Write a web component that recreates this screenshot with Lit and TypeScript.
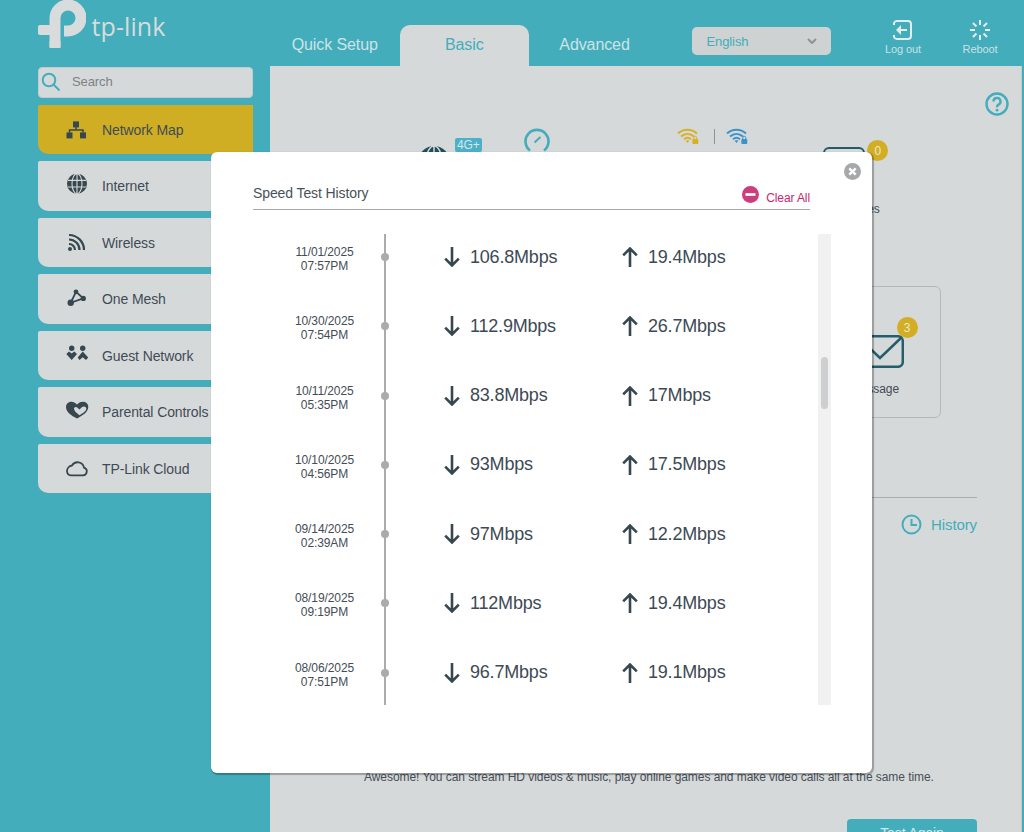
import { LitElement, html, svg, css } from 'lit';
import { customElement } from 'lit/decorators.js';

const menu = [
  { label: 'Network Map', icon: 'map', active: true },
  { label: 'Internet', icon: 'globe' },
  { label: 'Wireless', icon: 'wifi' },
  { label: 'One Mesh', icon: 'mesh' },
  { label: 'Guest Network', icon: 'guest' },
  { label: 'Parental Controls', icon: 'heart' },
  { label: 'TP-Link Cloud', icon: 'cloud' },
];

const history = [
  ['11/01/2025', '07:57PM', '106.8Mbps', '19.4Mbps'],
  ['10/30/2025', '07:54PM', '112.9Mbps', '26.7Mbps'],
  ['10/11/2025', '05:35PM', '83.8Mbps', '17Mbps'],
  ['10/10/2025', '04:56PM', '93Mbps', '17.5Mbps'],
  ['09/14/2025', '02:39AM', '97Mbps', '12.2Mbps'],
  ['08/19/2025', '09:19PM', '112Mbps', '19.4Mbps'],
  ['08/06/2025', '07:51PM', '96.7Mbps', '19.1Mbps'],
];

const menuIcon = (name: string) => {
  switch (name) {
    case 'map':
      return html`<svg viewBox="0 0 24 24" fill="#37474f" stroke="none">
        <rect x="9" y="3.4" width="6" height="6" />
        <rect x="2.5" y="14.4" width="6" height="6" />
        <rect x="16" y="14.4" width="6" height="6" />
        <path d="M5.5 14.5V12H19V14.5M12 9V12" fill="none" stroke="#37474f" stroke-width="1.5" />
      </svg>`;
    case 'globe':
      return html`<svg viewBox="0 0 24 24">
        <circle cx="13" cy="9.7" r="10" fill="#37474f" />
        <g fill="none" stroke="#d6d9da" stroke-width="1.1">
          <path d="M4 6.4H22M4 13H22M13 0V20" />
          <ellipse cx="13" cy="9.7" rx="5" ry="10" />
        </g>
      </svg>`;
    case 'wifi':
      return html`<svg viewBox="0 0 24 24" fill="none" stroke="#37474f" stroke-width="2.2">
        <circle cx="6" cy="18" r="2" fill="#37474f" stroke="none" />
        <path d="M5 13A6 6 0 0 1 11 19M5 8.5A10.5 10.5 0 0 1 15.5 19M5 4A15 15 0 0 1 20 19" />
      </svg>`;
    case 'mesh':
      return html`<svg viewBox="0 0 24 24" fill="#37474f">
        <path d="M12 4.8L6.7 15.8L19.3 11.4Z" fill="none" stroke="#37474f" stroke-width="1.8" />
        <circle cx="12" cy="4.8" r="2.4" />
        <circle cx="6.7" cy="15.8" r="3.2" />
        <circle cx="19.3" cy="11.4" r="2.6" />
      </svg>`;
    case 'guest':
      return html`<svg viewBox="0 0 24 24" fill="#37474f">
        <circle cx="7.7" cy="4.3" r="2.7" />
        <circle cx="18.7" cy="4.3" r="2.7" />
        <path d="M2.3 10L5 7.5L7.7 9.5L10.3 7.5L13 10L7.7 16Z" />
        <path d="M18.7 7.5L24.3 13.5L22 15.9L18.7 13.2L15.5 15.9L13.7 13.5Z" />
      </svg>`;
    case 'heart':
      return html`<svg class="wide" viewBox="0 0 24 24">
        <path d="M13 18.5C7 15.5 2 12 2 7C2 3.5 5 1.8 7.5 1.8C9.5 1.8 11.5 3 13 4.5C15 2.5 17 1.8 19 1.8C22 1.8 24.3 4 24.3 7C24.3 12 18 16 13 18.5Z" fill="#37474f" />
        <path d="M15.5 15.2C12.5 13 10 10.8 10 8.8C10 6.8 12.5 6.2 14 8.2L15.5 9.5L17.5 7.4C19.5 5.6 22.3 6.5 22.3 8.7C22.3 10.8 18.5 13.5 15.5 15.2Z" fill="#d6d9da" />
      </svg>`;
    default:
      return html`<svg viewBox="0 0 24 24" fill="none" stroke="#37474f" stroke-width="1.8">
        <path d="M7 18.4H19A4 4 0 0 0 20 10.6A6.5 6.5 0 0 0 8 8.5C5 9 3 11.5 3 14A4.5 4.5 0 0 0 7 18.4Z" />
      </svg>`;
  }
};

const arrow = (up: boolean) => html`<svg class="arrow" viewBox="0 0 16 20" fill="none" stroke="#37474f" stroke-width="2.6">
  ${up
    ? svg`<path d="M8 20V1.5M1.2 8.3L8 1.5L14.8 8.3" />`
    : svg`<path d="M8 0V18.5M1.2 11.7L8 18.5L14.8 11.7" />`}
</svg>`;

const bandIcon = (color: string) => html`<svg class="band" viewBox="0 0 22 16" fill="none" stroke=${color} stroke-width="2">
  <path d="M1 5.5C6.5 0.5 14.5 0.5 20 5.5M4 8.5C8 5 13 5 17 8.5M7 11.2C9 9.6 12 9.6 14 11.2" />
  <path d="M8.7 12.8L10.5 15L12.3 12.8C11.2 12.2 9.8 12.2 8.7 12.8Z" fill=${color} stroke="none" />
  <rect x="15.3" y="11" width="6" height="5" rx="1" fill=${color} stroke="none" />
  <path d="M16.8 11V9.8A1.5 1.5 0 0 1 19.8 9.8V11" stroke-width="1" />
</svg>`;

const spokes = [0, 45, 90, 135, 180, 225, 270, 315];

@customElement('app-root')
export class AppRoot extends LitElement {

  static styles = css`
    :host {
      display: block;
      position: relative;
      height: 832px;
      overflow: hidden;
      background: #43adbb;
      color: #3f4b56;
      font-family: "Liberation Sans", Arial, sans-serif;
      letter-spacing: -0.1px;
    }

    header {
      display: flex;
      height: 66px;
    }

    .brand {
      width: 270px;
      display: flex;
      padding-left: 38px;
      box-sizing: border-box;
    }

    .brand svg {
      width: 48px;
      height: 48px;
    }

    .word {
      margin-left: 5.5px;
      margin-top: 8px;
      font-family: "Open Sans", sans-serif;
      font-size: 25px;
      line-height: 36px;
      font-weight: 400;
      letter-spacing: 0.1px;
      color: #d8dcdc;
    }

    .tab {
      width: 129.5px;
      margin-top: 25px;
      display: flex;
      justify-content: center;
      padding-top: 11px;
      box-sizing: border-box;
      font-size: 16px;
      line-height: 18px;
      color: #cde3e6;
    }

    .tab.on {
      background: #d6d9da;
      border-radius: 10px 10px 0 0;
      color: #43adbb;
    }

    .tab.last {
      width: 131px;
    }

    .lang {
      width: 139px;
      height: 28px;
      margin: 27px 0 0 31.5px;
      padding: 0 14px 0 15px;
      box-sizing: border-box;
      display: flex;
      align-items: center;
      justify-content: space-between;
      background: #ced2d3;
      border-radius: 5px;
      font-size: 13px;
      color: #43adbb;
    }

    .lang svg {
      width: 10px;
      height: 6px;
    }

    .actions {
      display: flex;
      margin-left: 34px;
    }

    .action {
      width: 77px;
      padding-top: 19px;
      display: flex;
      flex-direction: column;
      align-items: center;
      font-size: 11px;
      line-height: 13px;
      color: #c9e2e5;
    }

    .action svg {
      width: 22px;
      height: 22px;
      margin-bottom: 2px;
    }

    .body {
      display: flex;
    }

    nav {
      width: 270px;
      padding-left: 38px;
      box-sizing: border-box;
    }

    .search {
      width: 215px;
      height: 31px;
      margin-top: 0.5px;
      margin-bottom: 7.5px;
      box-sizing: border-box;
      display: flex;
      align-items: center;
      gap: 11px;
      padding: 0 0 1px 1px;
      background: #d6d9da;
      border: 1px solid #c0cdd0;
      border-radius: 4px;
      font-size: 13px;
      color: #7c8286;
    }

    .search svg {
      width: 21px;
      height: 21px;
    }

    .item {
      width: 215px;
      height: 49.3px;
      margin-bottom: 7.2px;
      padding-left: 26px;
      box-sizing: border-box;
      display: flex;
      align-items: center;
      gap: 14px;
      background: #d6d9da;
      border-radius: 2px 0 0 10px;
      font-size: 14px;
      white-space: nowrap;
    }

    .item.on {
      background: #cfae24;
    }

    .item svg {
      width: 24px;
      height: 24px;
      flex: none;
    }

    .item svg.wide {
      overflow: visible;
    }

    .main {
      flex: 1;
      height: 766px;
      padding-right: 44px;
      background: #d6d9da;
      border-right: 1px solid #c6c9ca;
      margin-right: 2px;
      display: flex;
      flex-direction: column;
      box-sizing: border-box;
      font-size: 12px;
    }

    .main > * {
      flex: none;
    }

    .help {
      align-self: flex-end;
      width: 24px;
      height: 24px;
      margin: 26px -32px 0 0;
    }

    .status {
      display: flex;
      align-items: flex-start;
      height: 158px;
      margin-top: 12px;
      padding-left: 148px;
    }

    .earth {
      width: 32px;
      height: 32px;
      margin-top: 18px;
    }

    .tag {
      margin: 10px 0 0 5px;
      padding: 0 2px;
      height: 14px;
      line-height: 14px;
      background: #4db0c9;
      border-radius: 2px;
      color: #d6e6ea;
      font-size: 12px;
    }

    .gauge {
      width: 26px;
      height: 26px;
      margin-left: 42px;
    }

    .bands {
      margin-left: 73px;
      width: 130px;
      flex: none;
    }

    .band-icons {
      display: flex;
      align-items: center;
      padding-left: 54px;
    }

    .band {
      width: 22px;
      height: 16px;
    }

    .band-sep {
      width: 1px;
      height: 15px;
      margin: 0 11px 0 15px;
      background: #8f9496;
    }

    .band-names {
      margin-top: 7px;
      display: flex;
      gap: 28px;
      white-space: nowrap;
    }

    .clients {
      display: flex;
      flex-direction: column;
      align-items: flex-start;
      margin-left: 70px;
      margin-top: 19px;
    }

    .client-box {
      width: 42px;
      height: 30px;
      border: 2.5px solid #235a66;
      border-radius: 6px;
      box-sizing: border-box;
      position: relative;
    }

    .clients > span {
      margin-top: 25px;
      margin-left: 15px;
    }

    .count {
      position: absolute;
      width: 21px;
      height: 21px;
      border-radius: 50%;
      display: flex;
      align-items: center;
      justify-content: center;
      background: #d2ae25;
      color: #ece7c8;
      font-size: 12px;
    }

    .client-box .count {
      left: 42.5px;
      top: -9px;
    }

    .card {
      width: 132px;
      height: 132px;
      margin-left: 539px;
      box-sizing: border-box;
      border: 1px solid #b4b8b9;
      border-radius: 6px;
      display: flex;
      flex-direction: column;
      align-items: center;
      padding-top: 48px;
    }

    .mail {
      width: 48px;
      height: 33px;
      margin-left: 9px;
      position: relative;
    }

    .mail svg {
      display: block;
      width: 48px;
      height: 33px;
    }

    .mail .count {
      right: -14px;
      top: -18px;
    }

    .card > span {
      margin-top: 14px;
    }

    .rule {
      height: 1px;
      margin: 79px 0 0 94px;
      background: #a9adae;
    }

    .history {
      display: flex;
      justify-content: flex-end;
      align-items: center;
      gap: 9px;
      margin-top: 16px;
      font-size: 15px;
      color: #43adbb;
    }

    .history svg {
      width: 21px;
      height: 21px;
    }

    .note {
      margin: 235px 0 0 94px;
      line-height: 14px;
      letter-spacing: -0.06px;
      color: #474f57;
      white-space: nowrap;
    }

    .test {
      align-self: flex-end;
      width: 130px;
      height: 40px;
      margin-top: 35px;
      padding-top: 6px;
      box-sizing: border-box;
      text-align: center;
      background: #43adbb;
      border-radius: 4px 4px 0 0;
      color: #d6e6ea;
      font-size: 14px;
      line-height: 16px;
    }

    .modal {
      position: absolute;
      left: 211px;
      top: 152px;
      width: 661px;
      height: 621px;
      box-sizing: border-box;
      padding: 32px 0 0 42px;
      background: #fff;
      border-radius: 6px;
      box-shadow: 1px 1px 1px 1px rgba(0, 0, 0, 0.28);
    }

    .close {
      position: absolute;
      right: 11px;
      top: 11px;
      width: 17px;
      height: 17px;
    }

    .head {
      width: 557px;
      height: 25px;
      display: flex;
      justify-content: space-between;
      border-bottom: 1px solid #a5a9ab;
      font-size: 14px;
      line-height: 18px;
      color: #48515a;
    }

    .clear {
      display: flex;
      gap: 7px;
      font-size: 12px;
      line-height: 14px;
      color: #c8256f;
    }

    .clear svg {
      width: 17px;
      height: 17px;
      margin-top: 1.5px;
    }

    .clear span {
      margin-top: 7px;
    }

    .list {
      display: flex;
      width: 578px;
      height: 471px;
      margin-top: 24px;
    }

    .rows {
      flex: 1;
      display: flex;
      flex-direction: column;
      gap: 23.3px;
      padding-left: 16px;
      background: linear-gradient(#a9abad, #a9abad) 131px 0 / 2px 100% no-repeat;
    }

    .row {
      flex: none;
      height: 46px;
      display: flex;
      align-items: center;
    }

    .date {
      width: 111px;
      margin: 4px 1px 0 0;
      text-align: center;
      font-size: 12px;
      line-height: 14px;
      color: #444d55;
    }

    .dot {
      width: 8px;
      height: 8px;
      border-radius: 50%;
      background: #a9abad;
    }

    .speed {
      display: flex;
      align-items: center;
      gap: 10px;
      font-size: 18px;
      letter-spacing: -0.2px;
      color: #3d4a54;
    }

    .speed.down {
      width: 178px;
      margin-left: 55px;
    }

    .arrow {
      width: 16px;
      height: 20px;
    }

    .track {
      width: 13px;
      background: #f1f1f1;
      padding: 123px 0 0 3px;
      box-sizing: border-box;
    }

    .thumb {
      width: 7px;
      height: 52px;
      border-radius: 4px;
      background: #cdcfd0;
    }
  `;

  render() {
    return html`
      <header>
        <div class="brand">
          <svg viewBox="0 0 48 48" fill="#d8dcdc">
            <path d="M17 48V18A13 13 0 1 1 30 31H26" fill="none" stroke="#d8dcdc" stroke-width="11" />
            <rect x="0" y="25" width="14" height="10" rx="2" />
            <rect x="11.5" y="40" width="11" height="8" rx="2" />
          </svg>
          <span class="word">tp-link</span>
        </div>
        <div class="tab">Quick Setup</div>
        <div class="tab on">Basic</div>
        <div class="tab last">Advanced</div>
        <div class="lang">
          English
          <svg viewBox="0 0 10 6" fill="none" stroke="#8d9395" stroke-width="2"><path d="M1 1L5 5L9 1" /></svg>
        </div>
        <div class="actions">
          <div class="action">
            <svg viewBox="0 0 22 22" fill="none" stroke="#e4ecec" stroke-width="2">
              <path d="M2 6V4A3 3 0 0 1 5 2H16A3 3 0 0 1 19 5V17A3 3 0 0 1 16 20H5A3 3 0 0 1 2 18V16" />
              <path d="M9 6L4 11L9 16Z" fill="#e4ecec" stroke="none" />
              <path d="M9 11H15" />
            </svg>
            Log out
          </div>
          <div class="action">
            <svg viewBox="0 0 22 22" fill="none" stroke="#e4ecec" stroke-width="2">
              ${spokes.map(a => svg`<path d="M11 1V6" transform="rotate(${a} 11 11)" />`)}
            </svg>
            Reboot
          </div>
        </div>
      </header>
      <div class="body">
        <nav>
          <div class="search">
            <svg viewBox="0 0 21 21" fill="none" stroke="#43adbb" stroke-width="2">
              <circle cx="9" cy="9" r="6.3" />
              <path d="M13.5 13.5L19.5 19.5" />
            </svg>
            <span>Search</span>
          </div>
          ${menu.map(m => html`
            <div class="item ${m.active ? 'on' : ''}">${menuIcon(m.icon)}<span>${m.label}</span></div>
          `)}
        </nav>
        <section class="main">
          <svg class="help" viewBox="0 0 24 24" fill="none" stroke="#43adbb" stroke-width="2.4">
            <circle cx="12" cy="12" r="10.5" />
            <path d="M8.5 9.5A3.5 3.5 0 1 1 13.5 12.6C12.4 13.2 12 14 12 15.2" />
            <circle cx="12" cy="18.2" r="1.4" fill="#43adbb" stroke="none" />
          </svg>
          <div class="status">
            <svg class="earth" viewBox="0 0 32 32">
              <circle cx="16" cy="16" r="16" fill="#1f4f5c" />
              <path d="M0 9H32M0 23H32M16 0V32" stroke="#d6d9da" stroke-width="1.5" />
              <ellipse cx="16" cy="16" rx="8" ry="16" fill="none" stroke="#d6d9da" stroke-width="1.5" />
            </svg>
            <span class="tag">4G+</span>
            <svg class="gauge" viewBox="0 0 26 26" fill="none" stroke="#43adbb" stroke-width="2.6">
              <path d="M6 22.5A11.5 11.5 0 1 1 20 22.5" />
              <path d="M10.5 14.5L16.5 9" stroke-width="2" />
            </svg>
            <div class="bands">
              <div class="band-icons">
                ${bandIcon('#d8b026')}
                <span class="band-sep"></span>
                ${bandIcon('#3d93c9')}
              </div>
              <div class="band-names"><span>1111 2.4GHz</span><span>5GHz</span></div>
            </div>
            <div class="clients">
              <div class="client-box"><span class="count">0</span></div>
              <span>Devices</span>
            </div>
          </div>
          <div class="card">
            <div class="mail">
              <svg viewBox="0 0 48 33" fill="none" stroke="#255e6b" stroke-width="2.5">
                <rect x="1.2" y="1.2" width="45.6" height="30.6" rx="5" />
                <path d="M2 2L24 23L46 2" />
              </svg>
              <span class="count">3</span>
            </div>
            <span>Message</span>
          </div>
          <div class="rule"></div>
          <div class="history">
            <svg viewBox="0 0 21 21" fill="none" stroke="#43adbb" stroke-width="2">
              <circle cx="10.5" cy="10.5" r="9" />
              <path d="M10.5 5V11H16" />
            </svg>
            History
          </div>
          <div class="note">Awesome! You can stream HD videos &amp; music, play online games and make video calls all at the same time.</div>
          <div class="test">Test Again</div>
        </section>
      </div>
      <div class="modal">
        <svg class="close" viewBox="0 0 17 17">
          <circle cx="8.5" cy="8.5" r="8.5" fill="#a6a8aa" />
          <path d="M5.3 5.3L11.7 11.7M11.7 5.3L5.3 11.7" stroke="#fff" stroke-width="2.4" />
        </svg>
        <div class="head">
          <span>Speed Test History</span>
          <div class="clear">
            <svg viewBox="0 0 17 17">
              <circle cx="8.5" cy="8.5" r="8.5" fill="#cc3d7c" />
              <rect x="3.5" y="7.2" width="10" height="2.6" fill="#fff" />
            </svg>
            <span>Clear All</span>
          </div>
        </div>
        <div class="list">
          <div class="rows">
            ${history.map(h => html`
              <div class="row">
                <div class="date">${h[0]}<br />${h[1]}</div>
                <span class="dot"></span>
                <div class="speed down">${arrow(false)}<span>${h[2]}</span></div>
                <div class="speed">${arrow(true)}<span>${h[3]}</span></div>
              </div>
            `)}
          </div>
          <div class="track"><div class="thumb"></div></div>
        </div>
      </div>
    `;
  }

}
